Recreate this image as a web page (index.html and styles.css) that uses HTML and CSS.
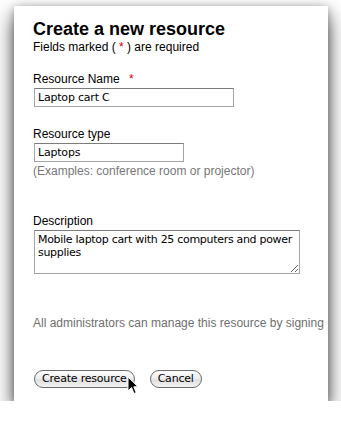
FILE: index.html
```html
<!DOCTYPE html>
<html lang="en">
<head>
<meta charset="UTF-8">
<title>Create a new resource</title>
<link rel="stylesheet" href="styles.css">
</head>
<body>
<div class="window">
    <h1>Create a new resource</h1>
    <p class="note">Fields marked ( <span class="req">*</span> ) are required</p>

    <label class="label first" for="name">Resource Name <span class="req star">*</span></label>
    <input type="text" id="name" class="field name" value="Laptop cart C">

    <label class="label second" for="type">Resource type</label>
    <input type="text" id="type" class="field type" value="Laptops">
    <p class="hint">(Examples: conference room or projector)</p>

    <label class="label desc-label" for="desc">Description</label>
    <textarea id="desc" class="field desc">Mobile laptop cart with 25 computers and power supplies</textarea>

    <p class="admins">All administrators can manage this resource by signing</p>

    <div class="buttons">
        <button class="btn">Create resource</button>
        <button class="btn">Cancel</button>
    </div>
</div>
<svg class="cursor" width="12" height="20" viewBox="0 0 12 20">
    <path d="M1 1 L1 15 L4.5 11.5 L7 17.5 L9.2 16.6 L6.8 10.8 L11 10.8 Z" fill="#000" stroke="#fff" stroke-width="1"/>
</svg>
</body>
</html>
```

FILE: styles.css
```css
body {
    margin: 0;
    padding: 6px 0 0 14px;
    background: #fff;
    font-family: "Liberation Sans", Arial, sans-serif;
    color: #000;
}
.window {
    width: 314px;
    height: 395px;
    box-sizing: border-box;
    padding: 12px 0 0 19px;
    background: #fff;
    overflow: hidden;
    box-shadow: 0 10px 20px rgba(0, 0, 0, 0.7), 0 2px 8px rgba(0, 0, 0, 0.3);
}
h1 {
    margin: 0;
    font-size: 18px;
    line-height: 22px;
    font-weight: bold;
}
.note {
    margin: 0;
    font-size: 12px;
    line-height: 14px;
}
.req {
    color: #c00;
}
.star {
    margin-left: 6px;
}
.label {
    display: block;
    font-size: 12px;
    line-height: 14px;
}
.first {
    margin-top: 18px;
}
.second {
    margin-top: 20px;
}
.desc-label {
    margin-top: 36px;
}
.field {
    display: block;
    margin: 2px 0 0 1px;
    box-sizing: border-box;
    border: 1px solid #a5a5a5;
    border-top-color: #7c7c7c;
    padding: 0 3px;
    font-family: "DejaVu Sans", Verdana, sans-serif;
    font-size: 11px;
    letter-spacing: -0.2px;
    color: #000;
    background: #fff;
    outline: none;
}
.name {
    width: 200px;
    height: 19px;
}
.type {
    width: 150px;
    height: 19px;
}
.hint {
    margin: 2px 0 0;
    font-size: 12px;
    line-height: 14px;
    color: #777;
}
.desc {
    width: 266px;
    height: 44px;
    padding: 2px 2px 2px 3px;
    line-height: 13px;
    letter-spacing: -0.3px;
    resize: vertical;
    overflow: hidden;
}
.admins {
    margin: 42px 0 0;
    font-size: 12px;
    line-height: 14px;
    color: #6f6f6f;
    white-space: nowrap;
}
.buttons {
    display: flex;
    gap: 15px;
    margin: 40px 0 0 1px;
}
.btn {
    height: 18px;
    padding: 0 7px;
    border: 1px solid #6b6b6b;
    border-radius: 9px;
    background: linear-gradient(#fdfdfd, #ececec 50%, #dedede 55%, #f4f4f4);
    font-family: "DejaVu Sans", Verdana, sans-serif;
    font-size: 11px;
    letter-spacing: -0.2px;
    line-height: 16px;
    color: #000;
}
.cursor {
    position: absolute;
    left: 127px;
    top: 376px;
}
```
